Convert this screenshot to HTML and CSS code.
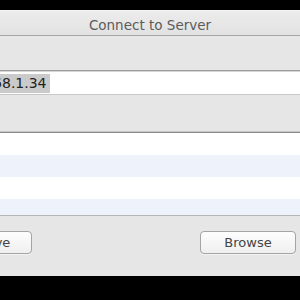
FILE: index.html
```html
<!DOCTYPE html>
<html>
<head>
<meta charset="utf-8">
<link rel="stylesheet" href="styles.css">
</head>
<body>
<div class="screen">
  <div class="window">
    <div class="titlebar">Connect to Server</div>
    <div class="content">
      <div class="field"><span class="selection">192.168.1.34</span></div>
      <div class="list">
        <div class="row"></div>
        <div class="row alt"></div>
        <div class="row"></div>
        <div class="row alt"></div>
      </div>
    </div>
    <div class="buttons">
      <button class="btn">Remove</button>
      <div class="spacer"></div>
      <button class="btn">Browse</button>
      <button class="btn">Connect</button>
    </div>
  </div>
</div>
</body>
</html>
```
FILE: styles.css
```css
html, body {
  margin: 0;
  padding: 0;
  background: #000;
  width: 300px;
  height: 300px;
  overflow: hidden;
  font-family: "DejaVu Sans", "Liberation Sans", sans-serif;
}
.screen {
  padding-top: 10px;
  width: 300px;
  height: 290px;
  overflow: hidden;
}
.window {
  margin-left: -124px;
  width: 548px;
  height: 266px;
  background: #e6e6e6;
  display: flex;
  flex-direction: column;
}
.titlebar {
  height: 22px;
  padding-top: 2px;
  border-top: 1px solid #f4f4f4;
  border-bottom: 1px solid #a6a6a6;
  background: linear-gradient(#ececec, #e2e2e2);
  text-align: center;
  font-size: 13.5px;
  line-height: 25px;
  color: #5c5c5c;
  overflow: hidden;
}
.content {
  padding-top: 34px;
}
.field {
  margin: 0 20px 0 73px;
  background: #fff;
  border-top: 1px solid #9c9c9c;
  border-bottom: 1px solid #c9c9c9;
  border-left: 1px solid #b8b8b8;
  border-right: 1px solid #b8b8b8;
  box-shadow: inset 0 1px 0 #d6d6d6;
  padding: 2px 0 0 3px;
  box-sizing: border-box;
  height: 25px;
}
.selection {
  display: inline-block;
  background: #cacaca;
  font-size: 14px;
  line-height: 19px;
  color: #222;
  padding-right: 3px;
}
.list {
  margin-top: 37px;
  height: 82px;
  overflow: hidden;
  background: #fff;
  border-top: 1px solid #8a8a8a;
  border-bottom: 1px solid #b6b6b6;
  box-shadow: 0 -1px 0 #c6c6c6;
}
.row {
  height: 22px;
  background: #fff;
}
.row.alt {
  background: #eef2fa;
}
.buttons {
  display: flex;
  align-items: flex-start;
  gap: 12px;
  padding: 15px 20px 0 60px;
}
.spacer {
  flex: 1;
}
.btn {
  width: 96px;
  height: 23px;
  margin: 0;
  padding: 0;
  border: 1px solid #a4a4a4;
  border-radius: 4px;
  background: linear-gradient(#fdfdfd, #efefef);
  box-shadow: 0 1px 0 #f2f2f2;
  font-family: "DejaVu Sans", "Liberation Sans", sans-serif;
  font-size: 13px;
  line-height: 21px;
  color: #444;
}
```
